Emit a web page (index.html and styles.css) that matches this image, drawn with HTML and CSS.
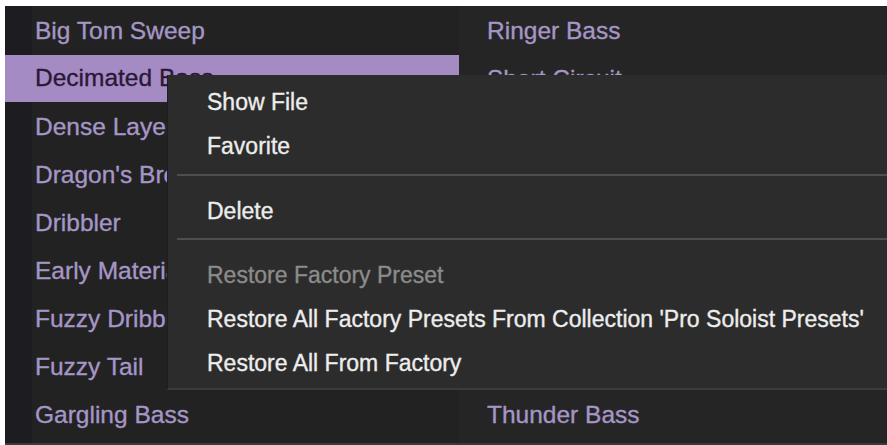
FILE: index.html
```html
<!DOCTYPE html>
<html lang="en">
<head>
    <meta charset="UTF-8">
    <meta name="viewport" content="width=device-width, initial-scale=1.0">
    <title>Preset Browser</title>
    <link rel="stylesheet" href="styles.css">
</head>
<body>
    <div class="browser">
        <div class="preset-list left-col">
            <div class="preset">Big Tom Sweep</div>
            <div class="preset selected">Decimated Bass</div>
            <div class="preset">Dense Layers</div>
            <div class="preset">Dragon's Breath</div>
            <div class="preset">Dribbler</div>
            <div class="preset">Early Material</div>
            <div class="preset">Fuzzy Dribble</div>
            <div class="preset">Fuzzy Tail</div>
            <div class="preset">Gargling Bass</div>
        </div>
        <div class="preset-list right-col">
            <div class="preset">Ringer Bass</div>
            <div class="preset">Short Circuit</div>
            <!-- rows hidden behind the menu -->
            <div class="preset"></div>
            <div class="preset"></div>
            <div class="preset"></div>
            <div class="preset"></div>
            <div class="preset"></div>
            <div class="preset"></div>
            <div class="preset">Thunder Bass</div>
        </div>

        <!-- right-click menu over the selected preset -->
        <div class="context-menu">
            <div class="menu-item">Show File</div>
            <div class="menu-item">Favorite</div>
            <div class="menu-sep sep-one"></div>
            <div class="menu-item">Delete</div>
            <div class="menu-sep sep-two"></div>
            <div class="menu-item disabled">Restore Factory Preset</div>
            <div class="menu-item">Restore All Factory Presets From Collection 'Pro Soloist Presets'</div>
            <div class="menu-item">Restore All From Factory</div>
        </div>
    </div>
</body>
</html>
```

FILE: styles.css
```css
body {
    margin: 0;
    background-color: #ffffff;
    font-family: "Liberation Sans", Arial, sans-serif;
    overflow: hidden;
}

.browser {
    position: relative;
    margin: 6px 0 0 5px;
    height: 439px;
    background-color: #222222;
    display: grid;
    grid-template-columns: 454px 1fr;
    border-bottom: 2px solid #3a3a3a;
    box-sizing: border-box;
}

.preset-list {
    padding-top: 1px;
}

.left-col {
    background: linear-gradient(to right, #1d1c20 0, #1d1c20 27px, #222222 27px);
}

.right-col {
    background-color: #252525;
}

.preset {
    height: 48px;
    line-height: 48px;
    font-size: 24.5px;
    color: #a596c6;
    white-space: nowrap;
    overflow: hidden;
    -webkit-text-stroke: 0.35px currentColor;
}

.left-col .preset {
    padding-left: 30px;
}

.right-col .preset {
    padding-left: 28px;
}

.preset.selected {
    background-color: #a58bc3;
    color: #2a1838;
    height: 47px;
    line-height: 46px;
    margin-bottom: 1px;
}

.context-menu {
    position: absolute;
    left: 162px;
    top: 69px;
    right: 0;
    padding: 5px 0 3px 0;
    background-color: #2c2c2c;
    border-left: 1px solid #1e1e1e;
    border-bottom: 2px solid #3b3b3b;
}

.menu-item {
    height: 44px;
    line-height: 44px;
    padding-left: 39px;
    font-size: 23px;
    color: #ededed;
    white-space: nowrap;
    -webkit-text-stroke: 0.35px currentColor;
}

.menu-item.disabled {
    color: #8b8b8b;
}

.menu-sep {
    height: 2px;
    margin-left: 9px;
    background-color: #4e4e4e;
}

.sep-one {
    margin-top: 6px;
    margin-bottom: 13px;
}

.sep-two {
    margin-top: 5px;
    margin-bottom: 13px;
}
```
